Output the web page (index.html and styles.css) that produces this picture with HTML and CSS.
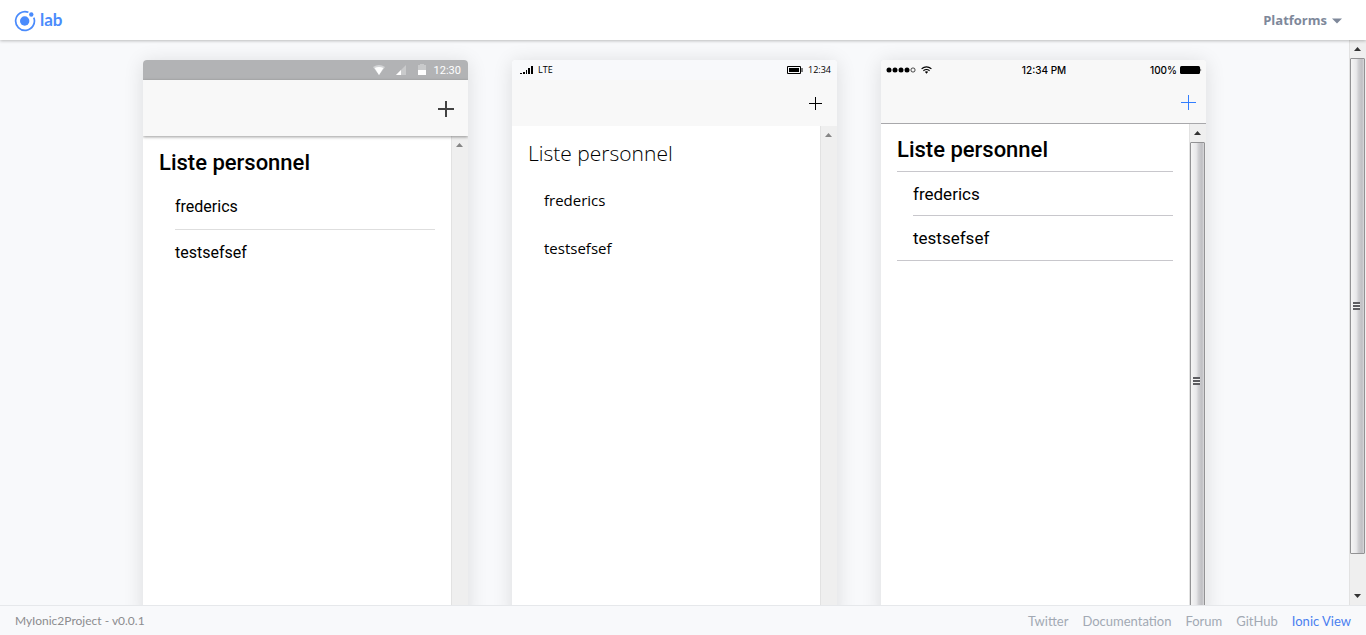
FILE: index.html
```html
<!DOCTYPE html>
<html lang="en">
<head>
<meta charset="utf-8">
<title>Ionic Lab</title>
<link rel="stylesheet" href="styles.css">
</head>
<body>
<header class="topbar">
  <a class="brand" href="#">
    <svg class="brand-mark" width="22" height="22" viewBox="0 0 22 22" aria-hidden="true">
      <path d="M14.4 2.2A9.4 9.4 0 1 0 19.8 7.6" fill="none" stroke="#4a8bfc" stroke-width="1.7"/>
      <circle cx="10.7" cy="11" r="4.7" fill="#4a8bfc"/>
      <circle cx="17.3" cy="4.5" r="2.2" fill="#4a8bfc"/>
    </svg>
    <span>lab</span>
  </a>
  <button class="platforms" type="button">Platforms
    <svg width="10" height="6" viewBox="0 0 10 6" aria-hidden="true"><path d="M0 .5h10L5 5.5z" fill="#7e889a"/></svg>
  </button>
</header>

<main class="stage">
  <div class="devices">
    <section class="phone android">
      <div class="status">
        <svg width="12" height="12" viewBox="0 0 12 12" aria-hidden="true"><path d="M0 3Q6-.8 12 3L6 11z" fill="#d3d4d6"/><path d="M1.6 4Q6 2 10.4 4L6 11z" fill="#fff"/></svg>
        <svg width="10" height="10" viewBox="0 0 10 10" aria-hidden="true"><path d="M10 0v10H0z" fill="#c9cacb"/><path d="M5 5v5H0z" fill="#fff"/></svg>
        <svg width="8" height="12" viewBox="0 0 8 12" aria-hidden="true"><path d="M0 1h2V0h4v1h2v5H0z" fill="#c9cacb"/><path d="M0 6h8v5H0z" fill="#fff"/></svg>
        <span>12:30</span>
      </div>
      <div class="toolbar">
        <button class="add" type="button" aria-label="Add"><svg width="16" height="16" viewBox="0 0 16 16"><path d="M0 8h16M8 0v16" stroke="#424242" stroke-width="2"/></svg></button>
      </div>
      <div class="body">
        <div class="content">
          <h2>Liste personnel</h2>
          <ul><li>frederics</li><li>testsefsef</li></ul>
        </div>
        <div class="scroll idle"><i class="up"></i></div>
      </div>
    </section>

    <section class="phone windows">
      <div class="status">
        <svg width="13" height="9" viewBox="0 0 13 9" aria-hidden="true"><path d="M0 7h2v1H0zM3 6h2v2H3zM6 4h1v4H6zM8 2h2v6H8zM11 0h2v8h-2z" fill="#000"/></svg>
        <span class="carrier">LTE</span>
        <svg width="16" height="8" viewBox="0 0 16 8" aria-hidden="true"><path d="M.5.5h13v7H.5zM15 2v4" fill="none" stroke="#000"/><path d="M2 2h10v4H2z" fill="#000"/></svg>
        <span>12:34</span>
      </div>
      <div class="toolbar">
        <button class="add" type="button" aria-label="Add"><svg width="13" height="13" viewBox="0 0 13 13"><path d="M0 6.5h13M6.5 0v13" stroke="#000"/></svg></button>
      </div>
      <div class="body">
        <div class="content">
          <h2>Liste personnel</h2>
          <ul><li>frederics</li><li>testsefsef</li></ul>
        </div>
        <div class="scroll idle"><i class="up"></i></div>
      </div>
    </section>

    <section class="phone ios">
      <div class="status">
        <div class="side">
          <svg width="30" height="6" viewBox="0 0 30 6" aria-hidden="true"><g fill="#000"><circle cx="3" cy="3" r="2.5"/><circle cx="9" cy="3" r="2.5"/><circle cx="15" cy="3" r="2.5"/><circle cx="21" cy="3" r="2.5"/></g><circle cx="27" cy="3" r="2.1" fill="none" stroke="#000" stroke-width=".7"/></svg>
          <svg width="11" height="8" viewBox="0 0 11 8" aria-hidden="true"><path d="M.6 2.8Q5.5-1 10.4 2.8M2.4 4.7Q5.5 2.2 8.6 4.7" fill="none" stroke="#000" stroke-width="1.1"/><path d="M3.8 5.8Q5.5 4.5 7.2 5.8L5.5 7.8z"/></svg>
        </div>
        <span>12:34 PM</span>
        <div class="side end">
          <span>100%</span>
          <svg width="22" height="8" viewBox="0 0 22 8" aria-hidden="true"><rect width="20" height="8" rx="1.5"/><path d="M20.5 2.3q1.5 1.7 0 3.4z"/></svg>
        </div>
      </div>
      <div class="toolbar">
        <button class="add" type="button" aria-label="Add"><svg width="15" height="15" viewBox="0 0 15 15"><path d="M0 7.5h15M7.5 0v15" stroke="#327eff"/></svg></button>
      </div>
      <div class="body">
        <div class="content">
          <h2>Liste personnel</h2>
          <ul><li>frederics</li><li>testsefsef</li></ul>
        </div>
        <div class="scroll"><i class="up"></i><div class="thumb"><i class="grip"></i></div></div>
      </div>
    </section>
  </div>
  <div class="scroll page-scroll"><i class="up"></i><div class="thumb"><i class="grip"></i></div><i class="down"></i></div>
</main>

<footer class="footer">
  <span class="project">MyIonic2Project - v0.0.1</span>
  <nav>
    <a href="#">Twitter</a><a href="#">Documentation</a><a href="#">Forum</a><a href="#">GitHub</a><a class="active" href="#">Ionic View</a>
  </nav>
</footer>
</body>
</html>
```
FILE: styles.css
```css
* { box-sizing: border-box; }
body {
  margin: 0;
  height: 100vh;
  display: flex;
  flex-direction: column;
  overflow: hidden;
  background: #f8f9fb;
  font-family: Lato, sans-serif;
}
button { border: 0; padding: 0; background: none; font: inherit; cursor: pointer; }
a { color: inherit; text-decoration: none; }
svg { display: block; flex: none; }
h2, ul { margin: 0; padding: 0; }
ul { list-style: none; }

.topbar {
  display: flex;
  align-items: center;
  justify-content: space-between;
  flex: none;
  height: 40px;
  padding: 0 24px 0 14px;
  background: #fff;
  box-shadow: 0 1px 3px rgba(0, 0, 0, .25);
  z-index: 1;
}
.brand {
  display: flex;
  align-items: center;
  gap: 4px;
  padding-top: 2px;
  color: #4a8bfc;
  font: 700 17px/20px Lato, sans-serif;
}
.brand span { padding-bottom: 2px; }
.platforms {
  display: flex;
  align-items: center;
  gap: 5px;
  color: #7e889a;
  font: 700 13px/20px "Open Sans", sans-serif;
}
.platforms svg { margin-top: 2px; }

.stage { display: flex; flex: 1; min-height: 0; }
.devices {
  display: flex;
  flex: 1;
  justify-content: center;
  align-items: flex-start;
  gap: 44px;
  padding-top: 20px;
  overflow: hidden;
}
.phone {
  display: flex;
  flex-direction: column;
  width: 325px;
  height: 560px;
  border-radius: 4px 4px 0 0;
  overflow: hidden;
  background: #fff;
  color: #000;
  font-family: Roboto, sans-serif;
  box-shadow: 0 2px 20px rgba(0, 0, 0, .12);
}
.status { display: flex; align-items: center; flex: none; height: 20px; }
.toolbar {
  display: flex;
  align-items: center;
  justify-content: flex-end;
  flex: none;
  background: #f8f8f8;
}
.body { display: flex; flex: 1; min-height: 0; }
.content { flex: 1; padding: 0 16px; }
.content ul { padding-left: 16px; }
h2 { font-size: 22px; line-height: 26px; font-weight: 500; }
li { font-size: 16px; }

.android .status {
  justify-content: flex-end;
  gap: 12px;
  padding-right: 7px;
  background: #b2b3b5;
  color: #fff;
  font-size: 11px;
}
.android .status svg:first-child { margin-right: -1px; }
.android .status span { margin-left: -4px; }
.android .toolbar {
  height: 56px;
  padding: 1px 14px 0 0;
  box-shadow: 0 1px 3px rgba(0, 0, 0, .4);
  z-index: 1;
}
.android h2 { padding: 14px 0 8px; }
.android li { line-height: 45px; }
.android li + li { border-top: 1px solid #dedede; }

.windows .status {
  gap: 5px;
  padding: 0 6px 0 8px;
  background: #f8f9fb;
  font: 9px/20px "Open Sans", sans-serif;
}
.windows .carrier { flex: 1; }
.windows .toolbar { height: 46px; padding-right: 15px; }
.windows h2 { padding: 14px 0 10px; font: 300 21px/26px "Open Sans", sans-serif; }
.windows li { font: 15px/48px "Open Sans", sans-serif; }

.ios .status {
  padding: 0 4px 0 5px;
  background: #f8f8f8;
  font: 500 10px/20px Inter, sans-serif;
}
.side { display: flex; align-items: center; flex: 1; gap: 5px; }
.side.end { justify-content: flex-end; gap: 3px; }
.ios .toolbar {
  height: 44px;
  padding: 2px 10px 0 0;
  border-bottom: 1px solid #a8a8ab;
}
.ios h2 { padding: 13px 0 8px; border-bottom: 1px solid #c8c7cc; }
.ios ul { border-bottom: 1px solid #c8c7cc; }
.ios li { height: 44px; font-size: 17px; line-height: 44px; }
.ios li:first-child { border-bottom: 1px solid #c8c7cc; }

.scroll {
  display: flex;
  flex-direction: column;
  flex: none;
  width: 17px;
  background: #efefef;
  border-left: 1px solid #e2e2e2;
}
.up, .down { display: flow-root; flex: none; height: 18px; }
.up::after, .down::after {
  content: "";
  display: block;
  width: 7px;
  height: 4px;
  margin: 7px auto 0 4px;
  background: #333;
  clip-path: polygon(50% 0, 100% 100%, 0 100%);
}
.down::after { clip-path: polygon(0 0, 100% 0, 50% 100%); }
.idle .up::after { background: #858585; }
.thumb {
  display: grid;
  place-items: center;
  flex: 1;
  margin-right: 1px;
  border: 1px solid #929294;
  border-radius: 1px;
  background: linear-gradient(90deg, #f5f5f5 0%, #e8e8ea 40%, #cdcdd0 60%, #bfbfc3 85%, #dadadc 100%);
}
.grip {
  width: 7px;
  height: 8px;
  margin-right: 2px;
  background: repeating-linear-gradient(#5d5d61 0 2px, #f4f4f4 2px 3px);
}
.page-scroll .thumb { margin-bottom: 33px; }

.footer {
  display: flex;
  align-items: center;
  justify-content: space-between;
  flex: none;
  height: 30px;
  padding: 0 15px;
  border-top: 1px solid #e6e8eb;
  background: #f8f9fb;
  color: #8c8c8f;
  font-size: 13px;
  line-height: 20px;
}
.project { font-size: 12px; }
.footer nav { display: flex; gap: 14px; color: #a2a9b4; }
.footer .active { color: #4a7ff0; }
```
